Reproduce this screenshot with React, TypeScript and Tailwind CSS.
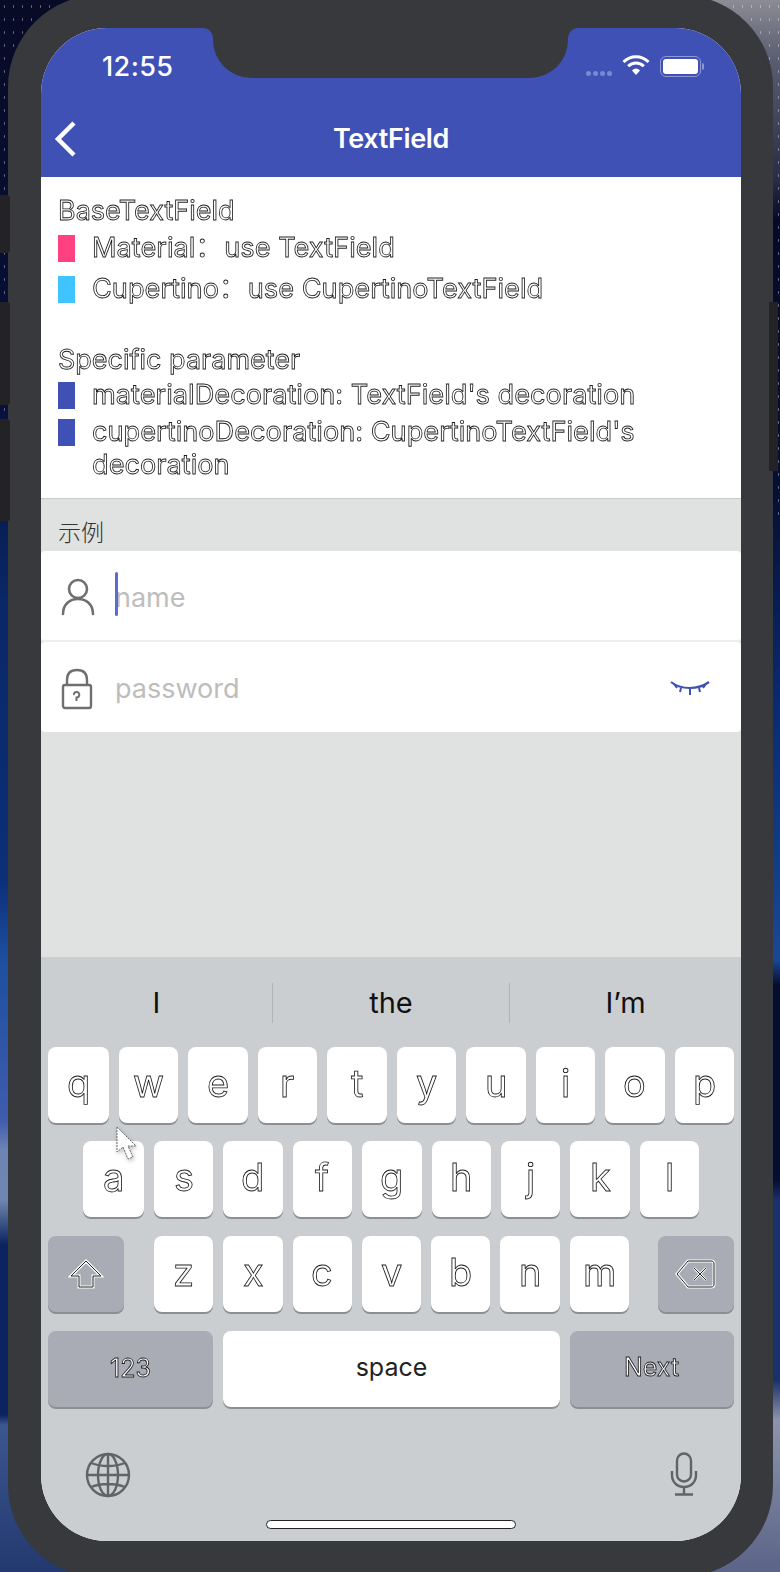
import React from "react";

const outline = "text-white [-webkit-text-stroke:0.85px_#1c1c1c] [will-change:transform]";
const font = "font-['Inter','Noto_Sans_CJK_SC',sans-serif]";
const frame = "bg-[#38393d]";

function Key({ label, className }: { label: string; className?: string }) {
  return (
    <div className={`h-full rounded-[8px] bg-white shadow-[0_2px_0_#8c8e93] flex items-center justify-center pb-1 ${className ?? "flex-1"}`}>
      <span className={`text-[38px] font-normal ${outline}`}>{label}</span>
    </div>
  );
}

function GreyKey({ children, className }: { children: React.ReactNode; className: string }) {
  return (
    <div className={`h-full rounded-[8px] bg-[#a9acb5] shadow-[0_2px_0_#8c8e93] flex items-center justify-center shrink-0 ${className}`}>
      {children}
    </div>
  );
}

function Bullet({ color, children, className }: { color: string; children: React.ReactNode; className?: string }) {
  return (
    <div className={`flex ${className ?? ""}`}>
      <div className={`w-[17px] h-[27px] mt-[4px] shrink-0 ${color}`} />
      <div className={`ml-[17px] w-[575px] text-[27.2px] leading-[33px] font-normal ${outline}`}>{children}</div>
    </div>
  );
}

export default function App() {
  return (
    <div className={`relative w-[780px] h-[1572px] overflow-hidden bg-[#070d2b] ${font}`}>
      {/* wallpaper, left and right of the device */}
      <div className="absolute inset-y-0 left-0 w-[390px] bg-[linear-gradient(180deg,#070b26_0px,#08103a_400px,#0a2766_600px,#0c2f78_880px,#1d4fa0_960px,#3f5cae_1120px,#6d84b4_1150px,#6f86b0_1200px,#0b235f_1245px,#0b235f_1415px,#3c5690_1425px,#23396f_1572px)]" />
      <div className="absolute inset-y-0 right-0 w-[390px] bg-[linear-gradient(180deg,#8b8c95_0px,#5a5c70_60px,#2a2c48_180px,#060a28_220px,#071033_500px,#0a2a6e_700px,#1a4890_960px,#060d30_985px,#060d30_1180px,#1a3169_1200px,#1a3169_1380px,#8d93ab_1420px,#5b6488_1572px)]" />
      <div className="absolute inset-x-0 top-0 h-[520px] bg-[radial-gradient(#ffffff_0.6px,transparent_1px)] bg-[length:9px_13px] opacity-40" />

      {/* side buttons */}
      <div className="absolute z-10 left-0 top-[195px] w-[10px] h-[58px] bg-[#232325] rounded-r-[3px]" />
      <div className="absolute z-10 left-0 top-[302px] w-[10px] h-[103px] bg-[#232325] rounded-r-[3px]" />
      <div className="absolute z-10 left-0 top-[419px] w-[10px] h-[102px] bg-[#232325] rounded-r-[3px]" />
      <div className="absolute z-10 right-[2px] top-[302px] w-[9px] h-[169px] bg-[#232325]" />

      {/* device */}
      <div className={`relative ml-[8px] mt-[-5px] w-[765px] h-[1582px] rounded-[92px] ${frame} pt-[33px] pb-[36px] pl-[33px] pr-[32px]`}>
        <div className="relative h-full rounded-[66px] overflow-hidden flex flex-col bg-white">
          {/* notch */}
          <div className={`absolute z-10 left-[172px] top-0 w-[355px] h-[50px] ${frame} rounded-b-[38px]`} />
          <div className={`absolute z-10 left-[162px] top-0 w-[10px] h-[10px] ${frame}`}>
            <div className="w-full h-full bg-[#3f51b5] rounded-tr-[10px]" />
          </div>
          <div className={`absolute z-10 left-[527px] top-0 w-[10px] h-[10px] ${frame}`}>
            <div className="w-full h-full bg-[#3f51b5] rounded-tl-[10px]" />
          </div>

          {/* header */}
          <div className="h-[149px] bg-[#3f51b5] shrink-0 flex flex-col">
            <div className="h-[80px] flex items-start justify-between pt-[22px]">
              <div className="ml-[61px] text-white text-[27px] leading-[34px] font-medium tracking-[0.4px]">12:55</div>
              <div className="flex items-center mr-[37px] mt-[6px] gap-[10px]">
                <div className="flex gap-[2px] mt-[13px]">
                  {[0, 1, 2, 3].map((i) => (
                    <div key={i} className="w-[5px] h-[5px] rounded-full bg-[#7c88cf]" />
                  ))}
                </div>
                <svg width="28" height="22" viewBox="0 0 28 22" className="mt-[-3px]">
                  <path d="M1.5 8 C8.5 1 19.5 1 26.5 8" fill="none" stroke="white" strokeWidth="3" />
                  <path d="M6.2 12.3 C10.5 8 17.5 8 21.8 12.3" fill="none" stroke="white" strokeWidth="3" />
                  <path d="M10 16.5 C12.5 13.8 15.5 13.8 18 16.5 L14 21 Z" fill="white" />
                </svg>
                <div className="flex items-center">
                  <div className="w-[41px] h-[21px] rounded-[6px] border border-[#8d97d6] p-[2px]">
                    <div className="w-full h-full bg-white rounded-[3px]" />
                  </div>
                  <div className="w-[2px] h-[7px] ml-[1px] bg-[#8d97d6] rounded-r" />
                </div>
              </div>
            </div>
            <div className="relative flex-1 flex items-center justify-center pb-[8px]">
              <svg width="26" height="38" viewBox="0 0 26 38" className="absolute left-[12px] top-[12px]">
                <path d="M21 3 L5 19 L21 35" fill="none" stroke="white" strokeWidth="4.5" />
              </svg>
              <div className="text-white text-[27px] font-semibold leading-[34px] tracking-[-0.35px]">TextField</div>
            </div>
          </div>

          {/* description */}
          <div className="h-[322px] shrink-0 bg-white pl-[17px] pt-[18px] border-b border-[#c9caca]">
            <div className={`text-[27px] leading-[32px] font-normal ${outline}`}>BaseTextField</div>
            <Bullet color="bg-[#ff4081]" className="mt-[4px]">Material<span className="tracking-[-6px]">：</span> use TextField</Bullet>
            <Bullet color="bg-[#40c4ff]" className="mt-[8px]">Cupertino<span className="tracking-[-6px]">：</span> use CupertinoTextField</Bullet>
            <div className={`mt-[39px] text-[27px] leading-[32px] font-normal ${outline}`}>Specific parameter</div>
            <Bullet color="bg-[#3f51b5]" className="mt-[2px]">materialDecoration: TextField's decoration</Bullet>
            <Bullet color="bg-[#3f51b5]" className="mt-[4px]">cupertinoDecoration: CupertinoTextField's decoration</Bullet>
          </div>

          {/* form */}
          <div className="flex-1 bg-[#e0e1e1] flex flex-col">
            <div className="h-[52px] shrink-0 pl-[17px] pt-[15px] text-[23px] leading-[34px] text-[#333] font-['Noto_Sans_CJK_SC',sans-serif] font-light">示例</div>
            <div className="h-[91px] shrink-0 bg-white flex items-center pl-[20px] rounded-[4px] border-b-2 border-[#eeeeee]">
              <svg width="34" height="38" viewBox="0 0 34 38" className="mt-[2px]">
                <circle cx="17" cy="11" r="9" fill="none" stroke="#6f6f6f" strokeWidth="2.6" />
                <path d="M2 36 C2 26 9 21 17 21 C25 21 32 26 32 36" fill="none" stroke="#6f6f6f" strokeWidth="2.6" strokeLinecap="round" />
              </svg>
              <div className="relative ml-[20px] mt-[4px] text-[27px] leading-[34px] text-[#bdbdbd]">
                <div className="absolute left-0 top-[-9px] w-[3px] h-[44px] bg-[#5b6cd0] rounded" />
                name
              </div>
            </div>
            <div className="h-[90px] shrink-0 bg-white flex items-center pl-[20px] rounded-[4px]">
              <svg width="32" height="42" viewBox="0 0 32 42" className="mt-[4px]">
                <path d="M6 17 V12 C6 5 10 2 16 2 C22 2 26 5 26 12 V17" fill="none" stroke="#6f6f6f" strokeWidth="2.4" />
                <rect x="2" y="17" width="28" height="23" rx="2" fill="none" stroke="#6f6f6f" strokeWidth="2.4" />
                <path d="M15.5 33 V29.5 C19 29.5 19.5 24 15.5 24 C13.5 24 12.8 25.5 13 27" fill="none" stroke="#6f6f6f" strokeWidth="2" />
              </svg>
              <div className="ml-[22px] mt-[4px] text-[27px] leading-[34px] text-[#bdbdbd]">password</div>
              <svg width="42" height="18" viewBox="0 0 42 18" className="ml-auto mr-[30px] mt-[4px]">
                <path d="M2 2 C12 10 29 10 40 2" fill="none" stroke="#3f51b5" strokeWidth="2.2" />
                <path d="M5 4 L8 8 M12 8 L11 12 M21 9 V15 M30 8 L31 12 M37 4 L34 8" fill="none" stroke="#3f51b5" strokeWidth="2" />
              </svg>
            </div>
          </div>

          {/* keyboard */}
          <div className="relative h-[584px] shrink-0 bg-[#cbced1] flex flex-col px-[7px]">
            <div className="-mx-[7px] h-[90px] shrink-0 flex items-center pt-[2px] text-[29px] text-[#111] font-normal">
              <div className="w-[232px] flex justify-center border-r border-[#b0b3b7] h-[40px] items-center">I</div>
              <div className="w-[237px] flex justify-center border-r border-[#b0b3b7] h-[40px] items-center">the</div>
              <div className="flex-1 flex justify-center h-[40px] items-center">I’m</div>
            </div>
            <div className="h-[76px] shrink-0 flex gap-[10px]">
              {"qwertyuiop".split("").map((k, i) => <Key key={k} label={k} className={i === 0 ? "w-[61px] shrink-0" : "flex-1"} />)}
            </div>
            <div className="h-[76px] mt-[18px] shrink-0 flex gap-[10px] pl-[35px] pr-[35px]">
              {"asdfghjkl".split("").map((k, i) => <Key key={k} label={k} className={i === 0 ? "w-[61px] shrink-0" : "flex-1"} />)}
            </div>
            <div className="h-[76px] mt-[19px] shrink-0 flex gap-[10px]">
              <GreyKey className="w-[76px] mr-[20px]">
                <svg width="36" height="32" viewBox="0 0 36 32">
                  <path d="M18 3 L33 18 H25 V29 H11 V18 H3 Z" fill="none" stroke="white" strokeWidth="3" />
                  <path d="M18 3 L33 18 H25 V29 H11 V18 H3 Z" fill="none" stroke="#222" strokeWidth="1" />
                </svg>
              </GreyKey>
              {"zxcvbnm".split("").map((k) => <Key key={k} label={k} />)}
              <GreyKey className="w-[76px] ml-[19px]">
                <svg width="42" height="32" viewBox="0 0 42 32">
                  <path d="M13 3 H36 C38 3 39 4 39 6 V26 C39 28 38 29 36 29 H13 L2 16 Z" fill="none" stroke="white" strokeWidth="3" />
                  <path d="M13 3 H36 C38 3 39 4 39 6 V26 C39 28 38 29 36 29 H13 L2 16 Z" fill="none" stroke="#222" strokeWidth="1" />
                  <path d="M19 10 L31 22 M31 10 L19 22" stroke="white" strokeWidth="2.4" />
                  <path d="M19 10 L31 22 M31 10 L19 22" stroke="#222" strokeWidth="1" />
                </svg>
              </GreyKey>
            </div>
            <div className="h-[76px] mt-[19px] shrink-0 flex gap-[10px]">
              <GreyKey className="w-[165px]"><span className={`text-[25px] font-normal ${outline}`}>123</span></GreyKey>
              <div className="flex-1 h-full rounded-[8px] bg-white shadow-[0_2px_0_#8c8e93] flex items-center justify-center pb-[3px]">
                <span className="text-[25px] font-normal text-[#222]">space</span>
              </div>
              <GreyKey className="w-[164px] pb-[2px]"><span className={`text-[25px] font-normal ${outline}`}>Next</span></GreyKey>
            </div>
            <div className="flex-1 flex justify-between items-start pl-[37px] pr-[36px] pt-[45px]">
              <svg width="46" height="46" viewBox="0 0 46 46">
                <g fill="none" stroke="#626365" strokeWidth="2.4">
                  <circle cx="23" cy="23" r="21" />
                  <ellipse cx="23" cy="23" rx="10" ry="21" />
                  <path d="M23 2 V44 M2 23 H44 M6 11 C16 15 30 15 40 11 M6 35 C16 31 30 31 40 35" />
                </g>
              </svg>
              <svg width="28" height="44" viewBox="0 0 28 44">
                <g fill="none" stroke="#626365" strokeWidth="2.4">
                  <rect x="7" y="1.5" width="14" height="28" rx="7" />
                  <path d="M2 19 V23 C2 30 7 35 14 35 C21 35 26 30 26 23 V19 M14 35 V42 M5 42.5 H23" />
                </g>
              </svg>
            </div>
            <div className="absolute left-[225px] top-[563px] w-[250px] h-[9px] rounded-full bg-white border border-[#222]" />
          </div>
        </div>
      </div>

      {/* cursor */}
      <svg width="24" height="40" viewBox="0 0 24 40" className="absolute z-10 left-[115px] top-[1126px] drop-shadow-[1px_2px_2px_rgba(0,0,0,0.25)]">
        <path d="M2 1 L2 26 L8 21 L13 33 L18 31 L13 20 L21 20 Z" fill="white" stroke="#6a6a6a" strokeWidth="1" strokeDasharray="2 1" />
      </svg>
    </div>
  );
}
